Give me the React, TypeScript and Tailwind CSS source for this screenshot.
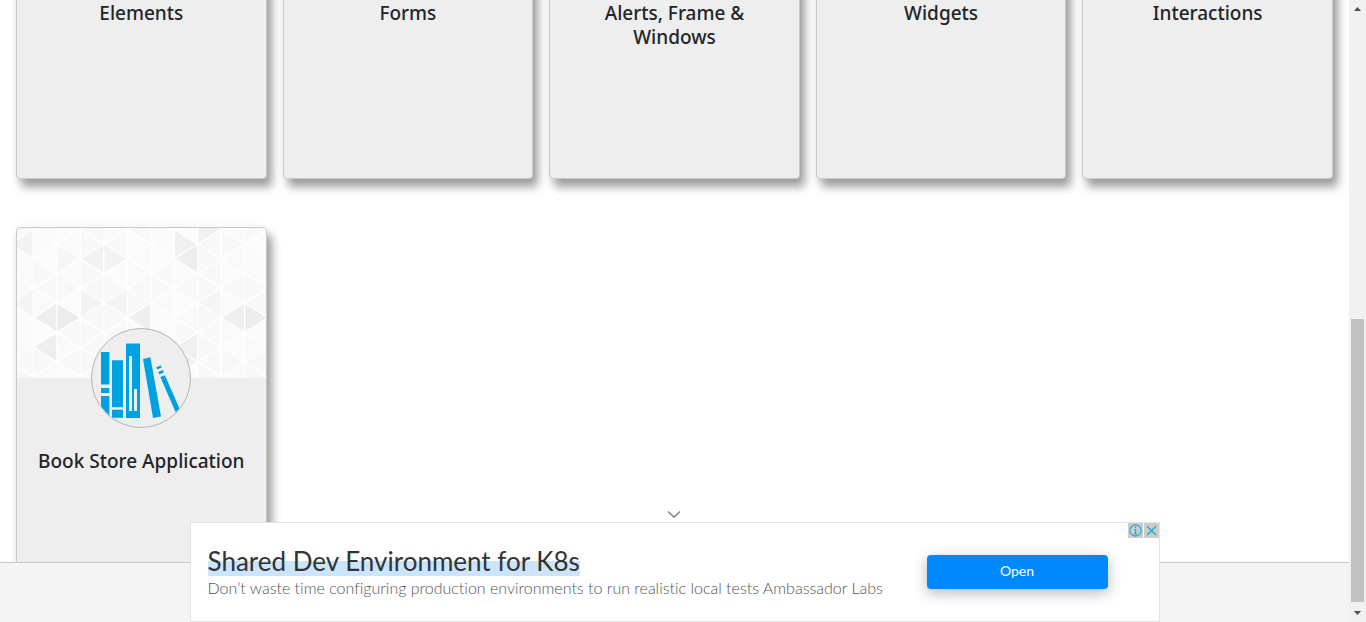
import type { ReactNode } from "react";

const COLUMN = 23.5;
const HALF = 14.75;

const SHADES: Record<string, string> = {
  "-1,0": "#f3f3f3",
  "-1,4": "#f4f4f4",
  "0,5": "#eeeeee",
  "1,5": "#ececec",
  "0,7": "#eeeeee",
  "1,1": "#f6f6f6",
  "2,1": "#f2f2f2",
  "3,1": "#f3f3f3",
  "2,4": "#f3f3f3",
  "3,4": "#f4f4f4",
  "4,5": "#efefef",
  "6,0": "#f0f0f0",
  "6,1": "#eeeeee",
  "7,-1": "#f0f0f0",
  "7,4": "#f5f5f5",
  "6,7": "#f0f0f0",
  "6,8": "#f2f2f2",
  "8,5": "#efefef",
  "9,5": "#ededed",
};

const LIGHT = ["#fafafa", "#f8f8f8", "#f9f9f9", "#fbfbfb", "#f8f8f8"];

function TrianglePattern() {
  const triangles: ReactNode[] = [];
  for (let i = -1; i < 11; i++) {
    for (let j = -2; j < 11; j++) {
      const left = 16.5 + COLUMN * i;
      const right = left + COLUMN;
      const y = 16 + HALF * j;
      const apexOnLeft = (i + j + 20) % 2 === 1;
      const apex = apexOnLeft ? left : right;
      const base = apexOnLeft ? right : left;
      const fill = SHADES[`${i},${j}`] ?? LIGHT[(i * 7 + j * 3 + i * j + 60) % 5];
      triangles.push(
        <polygon
          key={`${i},${j}`}
          points={`${apex},${y} ${base},${y - HALF} ${base},${y + HALF}`}
          fill={fill}
        />,
      );
    }
  }
  return (
    <svg
      className="block h-[150px] w-full bg-white"
      viewBox="0 0 249 150"
      preserveAspectRatio="none"
      aria-hidden="true"
    >
      <g stroke="#fefefe" strokeWidth="1.2">
        {triangles}
      </g>
    </svg>
  );
}

function BooksIcon() {
  return (
    <svg className="block size-full" viewBox="1 1 98 98" aria-hidden="true">
      <defs>
        <clipPath id="round">
          <circle cx="50" cy="50" r="49" />
        </clipPath>
      </defs>
      <g fill="#00a1e1" clipPath="url(#round)">
        <path d="M10 24h8.4v32.6H10zM10 60h8.4v5H10zM10 68h8.4v21H10z" />
        <path d="M21 32.3h11v46.9H21zM21 81.7h11v8H21z" />
        <path
          fillRule="evenodd"
          d="M35 15.6h14V90H35zM38 28v55h3V28zM43 61v22h3V61z"
        />
        <path d="M52 31l7.4-1.7L70 88.6 62 90z" />
        <path d="M69.3 49l4.6-1.8L88.7 81 85 85z" />
        <path d="M65 39.4l4.7-2.1.9 2.3-4.3 1.9zM67.2 44l4.5-2 1.1 2.6-4.5 1.9z" />
      </g>
    </svg>
  );
}

function Card({ title, icon }: { title: string; icon?: ReactNode }) {
  return (
    <a
      href="#"
      className="flex h-[400px] flex-col items-center rounded border border-[#cacaca] bg-[#eeeeee] text-[#212529] shadow-[5px_8px_10px_rgba(0,0,0,0.38),0_0_10px_rgba(0,0,0,0.05)]"
    >
      <div className="w-full overflow-hidden rounded-t">
        <TrianglePattern />
      </div>
      <div className="-mt-[50px] size-[100px] shrink-0 overflow-hidden rounded-full border border-[#b4b4b4] bg-[#eeeeee]">
        {icon}
      </div>
      <h5 className="mt-[21px] px-4 text-center font-['Noto_Sans','Open_Sans',sans-serif] text-[19px] leading-6 font-medium">
        {title}
      </h5>
    </a>
  );
}

function AdBanner() {
  return (
    <aside
      aria-label="Advertisement"
      className="absolute inset-x-0 bottom-0 mx-auto flex w-[970px] max-w-full flex-col items-center"
    >
      <button type="button" aria-label="Collapse" className="flex h-4 w-8 items-center justify-center">
        <svg className="h-4 w-4" viewBox="0 0 16 16" fill="none" stroke="#7b7b7b" strokeWidth="1.3" aria-hidden="true">
          <path d="M1 5.5l6 5.5 6-5.5" />
        </svg>
      </button>
      <div className="relative flex h-[100px] w-full items-center justify-between border border-[#e3e3e3] bg-white pr-[51px] pl-[17px] font-['Lato',sans-serif]">
        <div className="pt-0.5">
          <h2 className="w-fit bg-linear-to-b from-transparent from-50% to-[#cce5ff] to-50% text-[26px] leading-[30px] text-[#333333]">
            Shared Dev Environment for K8s
          </h2>
          <p className="text-base leading-6 font-light text-[#555555] [font-variant-ligatures:none]">
            Don’t waste time configuring production environments to run realistic local tests Ambassador Labs
          </p>
        </div>
        <button
          type="button"
          className="h-[34px] w-[181px] rounded bg-[#0088ff] pb-0.5 text-sm text-white shadow-[0_4px_14px_rgba(40,50,80,0.35)]"
        >
          Open
        </button>
        <div className="absolute top-0 right-0 flex gap-px">
          <button type="button" aria-label="Ad information" className="size-[15px] bg-[#cccccc]">
            <svg viewBox="0 0 15 15" fill="none" stroke="#17aecb" aria-hidden="true">
              <circle cx="7.5" cy="7.5" r="5.6" strokeWidth="1.1" />
              <path d="M7.5 3.6v1.4M6.3 6.5h1.2v4.2M6 10.9h3" strokeWidth="1.2" />
            </svg>
          </button>
          <button type="button" aria-label="Close ad" className="size-[15px] bg-[#cccccc]">
            <svg viewBox="0 0 15 15" fill="none" stroke="#17aecb" strokeWidth="1.4" aria-hidden="true">
              <path d="M3.2 3.2l8.8 8.8M12 3.2l-8.8 8.8" />
            </svg>
          </button>
        </div>
      </div>
    </aside>
  );
}

function ScrollTrack() {
  return (
    <div className="flex w-[17px] shrink-0 flex-col items-center bg-[#f1f1f1]" aria-hidden="true">
      <svg className="h-[17px] w-[17px] shrink-0" viewBox="0 0 17 17" fill="#505050">
        <path d="M5 11h7L8.5 7z" />
      </svg>
      <div className="grow" />
      <div className="h-[283px] w-[13px] bg-[#c1c1c1]" />
      <svg className="mt-[3px] h-[17px] w-[17px] shrink-0" viewBox="0 0 17 17" fill="#505050">
        <path d="M5 6h7l-3.5 4z" />
      </svg>
    </div>
  );
}

const CARDS: { title: string; icon?: ReactNode }[] = [
  { title: "Elements" },
  { title: "Forms" },
  { title: "Alerts, Frame & Windows" },
  { title: "Widgets" },
  { title: "Interactions" },
  { title: "Book Store Application", icon: <BooksIcon /> },
];

export default function App() {
  return (
    <div className="flex h-screen overflow-hidden bg-white">
      <div className="relative flex min-w-0 grow flex-col">
        <main className="min-h-0 grow overflow-hidden">
          <div className="-mt-[221px] grid grid-cols-5 gap-x-4 gap-y-12 px-4">
            {CARDS.map((card) => (
              <Card key={card.title} title={card.title} icon={card.icon} />
            ))}
          </div>
        </main>
        <footer className="h-[60px] shrink-0 border-t border-[#c8c8c8] bg-[#f4f4f4]" />
        <AdBanner />
      </div>
      <ScrollTrack />
    </div>
  );
}
